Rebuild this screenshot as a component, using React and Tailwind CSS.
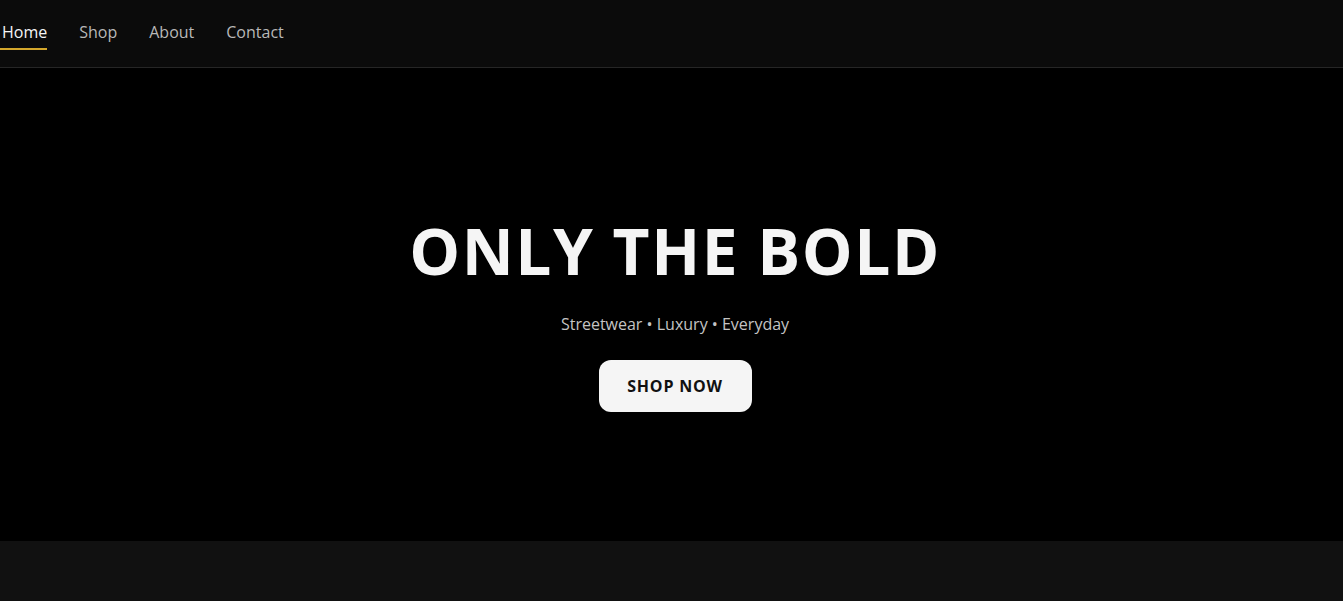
export default function App() {
  const links = ["Home", "Shop", "About", "Contact"];
  return (
    <div className="min-h-[601px] bg-[#111111] font-['Open_Sans',sans-serif]">
      <nav className="h-[68px] bg-[#0b0b0b] border-b border-[#262626] flex items-start gap-8 pl-[2px] pt-[24px]">
        {links.map((l, i) => (
          <a
            key={l}
            href="#"
            className={
              "relative text-[16px] leading-none " +
              (i === 0 ? "text-[#f5f5f5]" : "text-[#b8b8b8]")
            }
          >
            {l}
            {i === 0 && (
              <span className="absolute left-[-2px] right-0 top-[24px] h-[2px] bg-[#d4a72c]" />
            )}
          </a>
        ))}
      </nav>
      <section className="h-[473px] bg-black flex flex-col items-center justify-center pt-[22px] pl-[7px]">
        <h1 className="text-[64px] font-bold tracking-[0.024em] text-[#f5f5f5] leading-none">
          ONLY THE BOLD
        </h1>
        <p className="mt-[29px] text-[16px] text-[#c4c4c4]">
          Streetwear • Luxury • Everyday
        </p>
        <button className="mt-[24px] w-[153px] h-[52px] rounded-[12px] bg-[#f5f5f5] text-[#111] text-[16px] font-bold tracking-[0.05em]">
          SHOP NOW
        </button>
      </section>
    </div>
  );
}
